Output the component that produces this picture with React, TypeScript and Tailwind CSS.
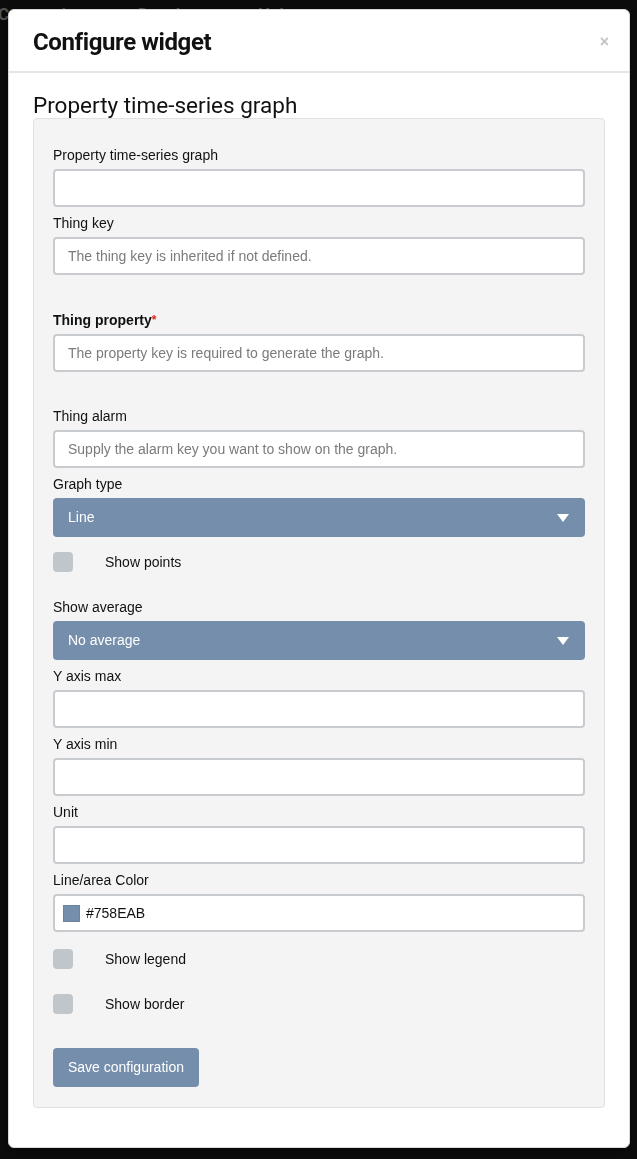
import { useState } from "react";

const inputCls =
  "block w-full h-[38px] rounded-[4px] border-2 border-[#c8cbcf] bg-white px-[13px] text-[14px] text-[#333] placeholder:text-[#7b7b7b] outline-none";

function Field({
  label,
  placeholder,
  required,
  className = "mb-[6px]"
}: {
  label: string;
  placeholder?: string;
  required?: boolean;
  className?: string;
}) {
  return (
    <div className={className}>
      <label className={"block h-5 leading-5 mb-[4px] text-[14px] text-[#111] " + (required ? "font-bold" : "")}>
        {label}
        {required && <span className="text-[#e0221b] text-[12px] align-top">*</span>}
      </label>
      <input className={inputCls} placeholder={placeholder} />
    </div>
  );
}

function SelectBox({ label, value }: { label: string; value: string }) {
  return (
    <div className="mb-[6px]">
      <label className="block h-5 leading-5 mb-[4px] text-[14px] text-[#111]">{label}</label>
      <div className="flex items-center justify-between h-[39px] rounded-[4px] bg-[#758eab] pl-[15px] pr-[16px] text-[14px] text-white">
        <span>{value}</span>
        <svg width="12" height="8" viewBox="0 0 12 8">
          <path d="M0 0H12L6 8Z" fill="#fff" />
        </svg>
      </div>
    </div>
  );
}

function Check({ label, className }: { label: string; className: string }) {
  const [on, setOn] = useState(false);
  return (
    <div className={"flex items-center h-5 " + className}>
      <button
        onClick={() => setOn(!on)}
        className="w-5 h-5 rounded-[4px] bg-[#c1c6cb] shrink-0"
        aria-pressed={on}
      />
      <span className="ml-8 text-[14px] text-[#111]">{label}</span>
    </div>
  );
}

export default function App() {
  return (
    <div className="min-h-screen bg-[#0c0c0c] font-['Liberation_Sans',Arial,sans-serif]">
      {/* nav behind the backdrop */}
      <div className="flex items-start h-[60px] pt-[2px] font-['Roboto',sans-serif] font-bold text-[17px] text-[#555] -ml-[2px]">
        <span className="w-[125px]">Connections</span>
        <span className="w-[118px] flex items-center gap-[3px]">
          <svg width="12" height="14" viewBox="0 0 12 14" className="mt-[2px]">
            <path d="M10 0L4 6L6 8L0 14L8 7L6 5Z" fill="#555" />
          </svg>
          Developer
        </span>
        <span className="flex items-center gap-[3px]">
          <span className="inline-block w-[14px] h-[14px] rounded-full border-2 border-[#555] mt-[2px]" />
          Help
        </span>
      </div>

      <div className="fixed inset-0 pt-[9px] pl-[8px] pr-[7px]">
        <div className="rounded-[6px] bg-white border border-[#d9d9d9] shadow-[0_3px_9px_rgba(0,0,0,0.5)]">
          {/* header */}
          <div className="flex items-center justify-between h-[63px] border-b-2 border-[#e5e5e5] pl-[24px] pr-[20px]">
            <h4 className="font-['Roboto',sans-serif] font-bold text-[24px] tracking-[-0.4px] text-[#111] pt-[3px]">
              Configure widget
            </h4>
            <button className="text-[16px] font-bold text-[#c4c4c4] leading-none pt-[3px]">×</button>
          </div>

          {/* body */}
          <div className="px-[24px] pb-[39px]">
            <h3 className="font-['Roboto',sans-serif] text-[22.5px] text-[#111] pt-[21px] pb-[2px] leading-[22px]">
              Property time-series graph
            </h3>
            <div className="rounded-[4px] border border-[#e1e1e1] bg-[#f4f4f4] px-[19px] pt-[26px] pb-[20px]">
              <Field label="Property time-series graph" />
              <Field label="Thing key" placeholder="The thing key is inherited if not defined." className="mb-[35px]" />
              <Field
                label="Thing property"
                required
                placeholder="The property key is required to generate the graph."
                className="mb-[34px]"
              />
              <Field label="Thing alarm" placeholder="Supply the alarm key you want to show on the graph." />
              <SelectBox label="Graph type" value="Line" />
              <Check label="Show points" className="mt-[15px] mb-[25px]" />
              <SelectBox label="Show average" value="No average" />
              <Field label="Y axis max" />
              <Field label="Y axis min" />
              <Field label="Unit" />
              <div>
                <label className="block h-5 leading-5 mb-[4px] text-[14px] text-[#111]">Line/area Color</label>
                <div className="flex items-center h-[38px] rounded-[4px] border-2 border-[#c8cbcf] bg-white pl-[8px]">
                  <span className="w-[17px] h-[17px] bg-[#758eab] border border-[#6a829e]" />
                  <span className="ml-[6px] text-[14px] text-[#111]">#758EAB</span>
                </div>
              </div>
              <Check label="Show legend" className="mt-[17px]" />
              <Check label="Show border" className="mt-[25px]" />
              <button className="mt-[34px] h-[39px] px-[15px] rounded-[4px] bg-[#758eab] text-[14px] text-white">
                Save configuration
              </button>
            </div>
          </div>
        </div>
      </div>
    </div>
  );
}
